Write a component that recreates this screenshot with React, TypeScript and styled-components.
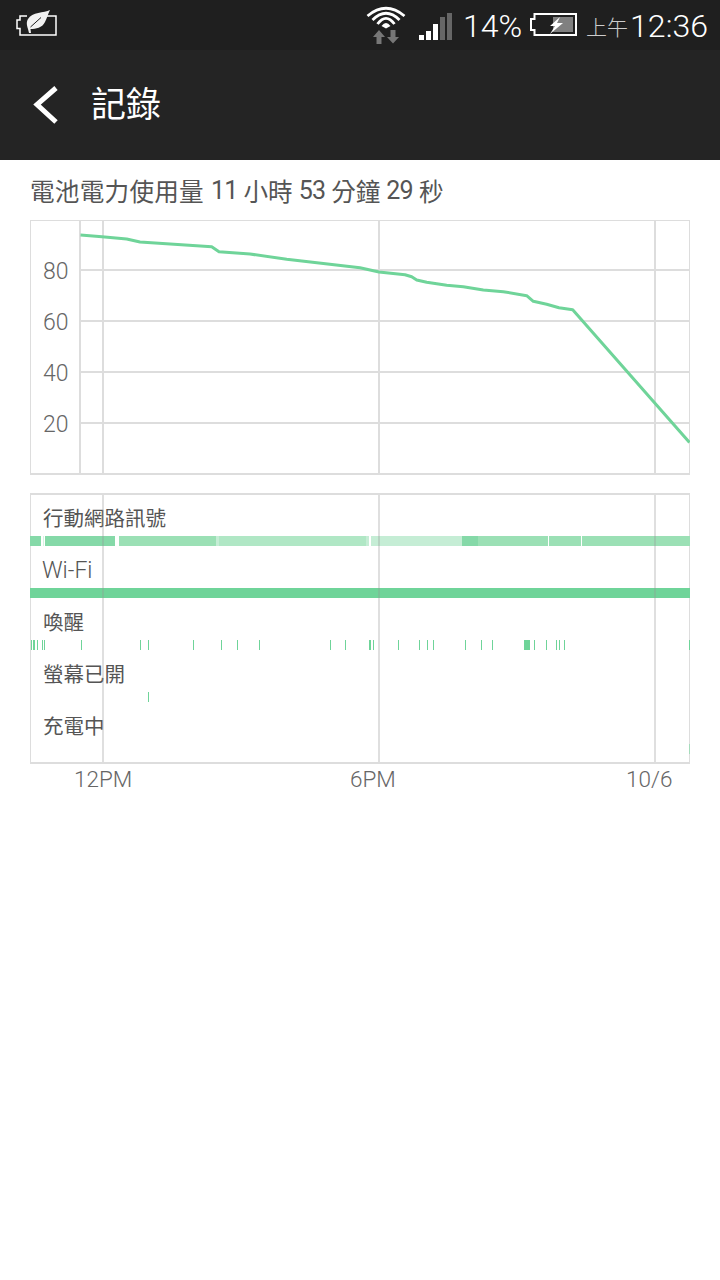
import * as React from "react"
import styled, { createGlobalStyle } from "styled-components"

const GlobalStyle = createGlobalStyle`
    html, body {
        margin: 0;
        padding: 0;
        background: #fff;
        font-family: Roboto, "Noto Sans CJK TC", sans-serif;
    }
`

const Page = styled.div`
    width: 720px;
    height: 1280px;
    background: #fff;
    overflow: hidden;
`

const StatusBar = styled.div`
    display: flex;
    align-items: center;
    justify-content: space-between;
    height: 50px;
    padding: 0 12px 0 16px;
    box-sizing: border-box;
    background: #1f1f1f;
    color: #fff;
`

const StatusRight = styled.div`
    display: flex;
    align-items: center;
`

const Percent = styled.span`
    font-size: 32px;
    font-weight: 300;
    line-height: 50px;
    margin: 1px 8px 0 11px;
`

const Meridiem = styled.span`
    font-size: 21px;
    font-weight: 300;
    color: #ccc;
    margin: 2px 2px 0 9px;
`

const Clock = styled.span`
    font-size: 32.1px;
    font-weight: 300;
    line-height: 50px;
    margin-top: 1px;
`

const SignalGap = styled.span`
    width: 13px;
`

const AppBar = styled.div`
    display: flex;
    align-items: center;
    height: 110px;
    padding-left: 32px;
    box-sizing: border-box;
    background: #242424;
`

const AppTitle = styled.h1`
    margin: 0 0 0 33px;
    font-size: 35px;
    font-weight: 400;
    line-height: 1;
    color: #fff;
`

const Summary = styled.div`
    display: flex;
    align-items: center;
    gap: 6px;
    height: 60px;
    padding: 0 0 0 30px;
    font-size: 24.6px;
    font-weight: 400;
    color: #555;
`

const SummaryLead = styled.span`
    letter-spacing: 0.25px;
    margin-right: 1px;
`

const Digits = styled.span`
    font-size: 25px;
    font-weight: 400;
    letter-spacing: -0.8px;
`

const ChartPanel = styled.div`
    position: relative;
    width: 660px;
    height: 255px;
    margin-left: 30px;
`

const PlotSvg = styled.svg`
    display: block;
`

const YAxis = styled.div`
    position: absolute;
    top: 26px;
    left: 13px;
`

const YLabel = styled.div`
    height: 51px;
    line-height: 51px;
    font-size: 23px;
    font-weight: 300;
    color: #666;
`

const TimelinePanel = styled.div`
    position: relative;
    width: 660px;
    height: 271px;
    margin: 18px 0 0 30px;
    box-sizing: border-box;
    border-top: 2px solid #ddd;
    border-bottom: 2px solid #ddd;
    border-left: 1px solid #ddd;
    border-right: 1px solid #ddd;
`

const TimelineRow = styled.div`
    display: flex;
    flex-direction: column;
`

const RowLabel = styled.div<{ $latin?: boolean }>`
    height: 42px;
    line-height: 48px;
    padding-left: ${p => (p.$latin ? "11px" : "12px")};
    font-size: ${p => (p.$latin ? "23px" : "20.5px")};
    font-weight: ${p => (p.$latin ? 300 : 400)};
    color: #555;
`

const TrackSvg = styled.svg`
    display: block;
    margin: -1px 0 1px -1px;
`

const GridLine = styled.div<{ $x: number }>`
    position: absolute;
    top: 0;
    bottom: 0;
    left: ${p => p.$x}px;
    width: 2px;
    background: rgba(150, 150, 150, 0.3);
`

const XAxis = styled.div`
    display: grid;
    grid-template-columns: repeat(3, 276px);
    padding-left: 74px;
    line-height: 30px;
    font-size: 22.5px;
    font-weight: 300;
    color: #666;
`

const GREEN = "#6fd499"

const LINE_POINTS = [
    [50.5, 15], [72, 16.7], [96.7, 19], [110, 22], [181.7, 26.7], [189, 31.7], [220, 34],
    [256.7, 39.3], [330, 47.7], [349, 52], [375, 54.7], [381.7, 56.7], [386.7, 60], [396.7, 62.3],
    [416.7, 65.3], [433.3, 66.7], [453.3, 70], [473.3, 71.7], [496.7, 75.7], [503.3, 81.3],
    [516.7, 84.3], [529, 87.7], [542.7, 89.7], [659.5, 222.5],
]

const SIGNAL_SEGMENTS: [number, number, string][] = [
    [0, 11, "#85d9a8"], [13, 1, "#d6f3e2"], [15, 70, "#85d9a8"], [89, 97, "#9be0b5"],
    [186, 3, "#c5edd5"], [189, 147, "#b0e7c5"], [336, 3, "#c5edd5"], [341, 91, "#c5edd5"],
    [432, 16, "#85d9a8"], [448, 70, "#9be0b5"], [519, 32, "#9be0b5"], [552, 108, "#9be0b5"],
]

const AWAKE_TICKS: [number, number][] = [
    [0.5, 1.5], [2.5, 2], [7, 1], [12, 1], [14, 1], [51, 1], [110, 1], [118, 1], [163, 1], [191, 1],
    [207, 1], [229, 1], [300, 1], [315, 1], [339, 2], [343, 1], [368, 1], [389, 1], [397, 1], [403, 1],
    [435, 1], [451, 1], [462, 1], [494, 6], [504, 1], [516, 1], [526, 1], [529, 1], [534, 1], [659, 1],
]

const Track: React.FunctionComponent<{ bars: [number, number, string][] }> = ({ bars }) => (
    <TrackSvg width="660" height="10" shapeRendering="crispEdges">
        {bars.map(([x, w, color]) => (
            <rect key={x} x={x} y="0" width={w} height="10" fill={color} />
        ))}
    </TrackSvg>
)

const asTicks = (ticks: [number, number][]): [number, number, string][] => ticks.map(([x, w]) => [x, w, GREEN])

const StatusLeaf = () => (
    <svg width="42" height="30" viewBox="0 0 42 30" fill="none">
        <path d="M11 6H4V10H1V18.500H4V25H40V6H31" stroke="#fff" strokeWidth="1.500" />
        <path d="M34 0C28 3 16 2 12 9C10 12 11 16 12 19L13 23H15L14.500 19C20 19 26 18 29 12C31 8 32 4 34 0z" fill="#f2f2f2" />
        <path d="M14.500 17L25 7.500" stroke="#1f1f1f" strokeWidth="1" />
    </svg>
)

const WifiIcon = () => (
    <svg width="40" height="44" viewBox="0 0 40 44" fill="none">
        <g stroke="#fff" strokeWidth="2.800">
            <path d="M1.500 13Q20-2.400 38.500 13" />
            <path d="M6.500 17Q20 3.600 33.500 17" />
            <path d="M11.500 21Q20 9.600 28.500 21" />
        </g>
        <path d="M15.500 23Q20 17 24.500 23L20 25.500z" fill="#fff" />
        <path d="M13 27L19 34H15.500V41H10.500V34H7zM24.500 27H29.500V34H33L27 40.500L21 34H24.500z" fill="#777" />
    </svg>
)

const SignalIcon = () => (
    <svg width="33" height="36" viewBox="0 0 33 36" shapeRendering="crispEdges">
        <rect x="0" y="28" width="5" height="5" fill="#fff" />
        <rect x="7" y="24" width="5" height="9" fill="#fff" />
        <rect x="14" y="17" width="5" height="16" fill="#fff" />
        <rect x="21" y="10" width="5" height="23" fill="#666" />
        <rect x="28" y="6" width="5" height="27" fill="#666" />
    </svg>
)

const BatteryIcon = () => (
    <svg width="47" height="24" viewBox="0 0 47 24" fill="none">
        <path d="M4.500 1H46V22H4.500V17H1V6H4.500z" stroke="#fff" strokeWidth="2" />
        <rect x="23" y="4" width="20" height="15" fill="#808080" />
        <path d="M30 4L20 13H25L20 21L33 10H27L30 4z" fill="#fff" />
    </svg>
)

const BackIcon = () => (
    <svg width="26" height="40" viewBox="0 0 26 40" fill="none">
        <path d="M24 3L5 19.500 24 37" stroke="#fff" strokeWidth="5" />
    </svg>
)

const BatteryPlot = () => (
    <PlotSvg width="660" height="255">
        <g shapeRendering="crispEdges">
            <rect x="0" y="0" width="660" height="1" fill="#ddd" />
            <rect x="0" y="253" width="660" height="2" fill="#ddd" />
            <rect x="0" y="0" width="1" height="255" fill="#ddd" />
            <rect x="659" y="0" width="1" height="255" fill="#ddd" />
            {[49, 100, 151, 202].map(y => (
                <rect key={y} x="50" y={y} width="610" height="2" fill="#ddd" />
            ))}
            {[49, 72, 348, 624].map(x => (
                <rect key={x} x={x} y="0" width="2" height="255" fill="#ddd" />
            ))}
        </g>
        <polyline
            points={LINE_POINTS.map(p => p.join(",")).join(" ")}
            fill="none"
            stroke={GREEN}
            strokeWidth="3"
            strokeLinejoin="round"
        />
    </PlotSvg>
)

export default function App() {
    return (
        <Page>
            <GlobalStyle />
            <StatusBar>
                <StatusLeaf />
                <StatusRight>
                    <WifiIcon />
                    <SignalGap />
                    <SignalIcon />
                    <Percent>14%</Percent>
                    <BatteryIcon />
                    <Meridiem>上午</Meridiem>
                    <Clock>12:36</Clock>
                </StatusRight>
            </StatusBar>
            <AppBar>
                <BackIcon />
                <AppTitle>記錄</AppTitle>
            </AppBar>
            <Summary>
                <SummaryLead>電池電力使用量</SummaryLead>
                <Digits>11</Digits>
                <span>小時</span>
                <Digits>53</Digits>
                <span>分鐘</span>
                <Digits>29</Digits>
                <span>秒</span>
            </Summary>
            <ChartPanel>
                <BatteryPlot />
                <YAxis>
                    <YLabel>80</YLabel>
                    <YLabel>60</YLabel>
                    <YLabel>40</YLabel>
                    <YLabel>20</YLabel>
                </YAxis>
            </ChartPanel>
            <TimelinePanel>
                <TimelineRow>
                    <RowLabel>行動網路訊號</RowLabel>
                    <Track bars={SIGNAL_SEGMENTS} />
                </TimelineRow>
                <TimelineRow>
                    <RowLabel $latin>Wi-Fi</RowLabel>
                    <Track bars={[[0, 660, GREEN]]} />
                </TimelineRow>
                <TimelineRow>
                    <RowLabel>喚醒</RowLabel>
                    <Track bars={asTicks(AWAKE_TICKS)} />
                </TimelineRow>
                <TimelineRow>
                    <RowLabel>螢幕已開</RowLabel>
                    <Track bars={asTicks([[118, 1]])} />
                </TimelineRow>
                <TimelineRow>
                    <RowLabel>充電中</RowLabel>
                    <Track bars={[[659, 1, "#a5dcbb"]]} />
                </TimelineRow>
                <GridLine $x={71} />
                <GridLine $x={347} />
                <GridLine $x={623} />
            </TimelinePanel>
            <XAxis>
                <span>12PM</span>
                <span>6PM</span>
                <span>10/6</span>
            </XAxis>
        </Page>
    )
}
